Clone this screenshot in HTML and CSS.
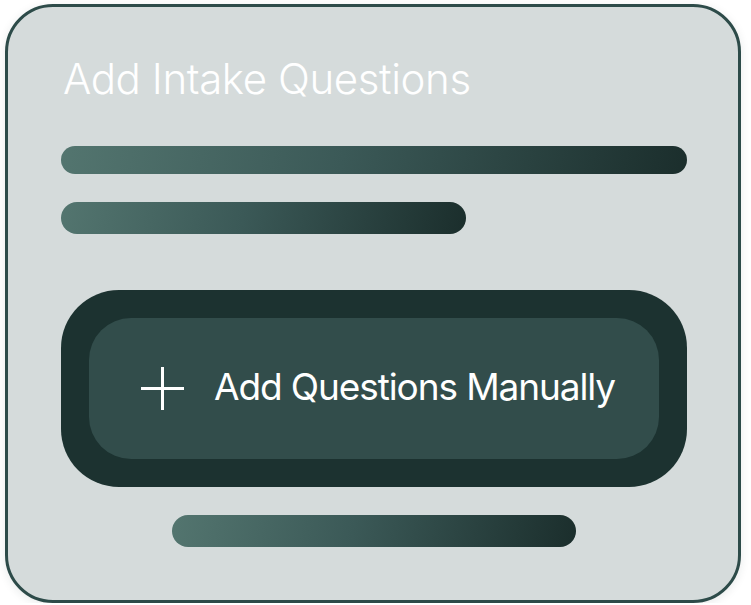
FILE: index.html
```html
<!DOCTYPE html>
<html lang="en">
<head>
<meta charset="utf-8">
<title>Add Intake Questions</title>
<link rel="stylesheet" href="styles.css">
</head>
<body>
<div class="card">
  <h1 class="title">Add Intake Questions</h1>
  <div class="bar bar-long"></div>
  <div class="bar bar-mid"></div>
  <div class="button-outer">
    <div class="button-inner">
      <svg class="plus" width="43" height="43" viewBox="0 0 43 43" aria-hidden="true">
        <line x1="21.5" y1="0" x2="21.5" y2="43" stroke="#fff" stroke-width="3"/>
        <line x1="0" y1="21.5" x2="43" y2="21.5" stroke="#fff" stroke-width="3"/>
      </svg>
      <span class="button-label">Add Questions Manually</span>
    </div>
  </div>
  <div class="bar bar-short"></div>
</div>
</body>
</html>
```
FILE: styles.css
```css
html, body {
  margin: 0;
  padding: 0;
  background: #ffffff;
}

.card {
  box-sizing: border-box;
  width: 736px;
  height: 599px;
  margin: 4px 0 0 5px;
  border: 3px solid #2d4b49;
  border-radius: 48px;
  background: #d5dbdb;
  box-shadow: 0 2px 10px rgba(30, 50, 48, 0.10);
  padding: 46px 51px 0 53px;
  display: flex;
  flex-direction: column;
}

.title {
  margin: 0 0 0 2px;
  font-family: Inter, "Noto Sans", sans-serif;
  font-weight: 300;
  font-size: 42px;
  line-height: 51px;
  letter-spacing: -0.4px;
  color: #ffffff;
}

.bar {
  background: linear-gradient(100deg, #53756f 0%, #3b5957 45%, #1b2e2c 100%);
  flex: none;
}

.bar-long {
  margin-top: 42px;
  width: 626px;
  height: 28px;
  border-radius: 14px;
}

.bar-mid {
  margin-top: 28px;
  width: 405px;
  height: 32px;
  border-radius: 16px;
}

.button-outer {
  margin-top: 56px;
  box-sizing: border-box;
  width: 626px;
  height: 197px;
  padding: 28px;
  border-radius: 58px;
  background: #1c3230;
  flex: none;
}

.button-inner {
  height: 100%;
  border-radius: 42px;
  background: #324d4b;
  display: flex;
  align-items: center;
  justify-content: center;
  gap: 30px;
  padding-left: 8px;
}

.plus {
  display: block;
  flex: none;
}

.button-label {
  font-family: Inter, "Noto Sans", sans-serif;
  font-weight: 400;
  font-size: 37px;
  letter-spacing: -1.1px;
  color: #ffffff;
  line-height: 44px;
  position: relative;
  top: -2px;
}

.bar-short {
  margin-top: 28px;
  align-self: center;
  width: 404px;
  height: 32px;
  border-radius: 16px;
}
```
